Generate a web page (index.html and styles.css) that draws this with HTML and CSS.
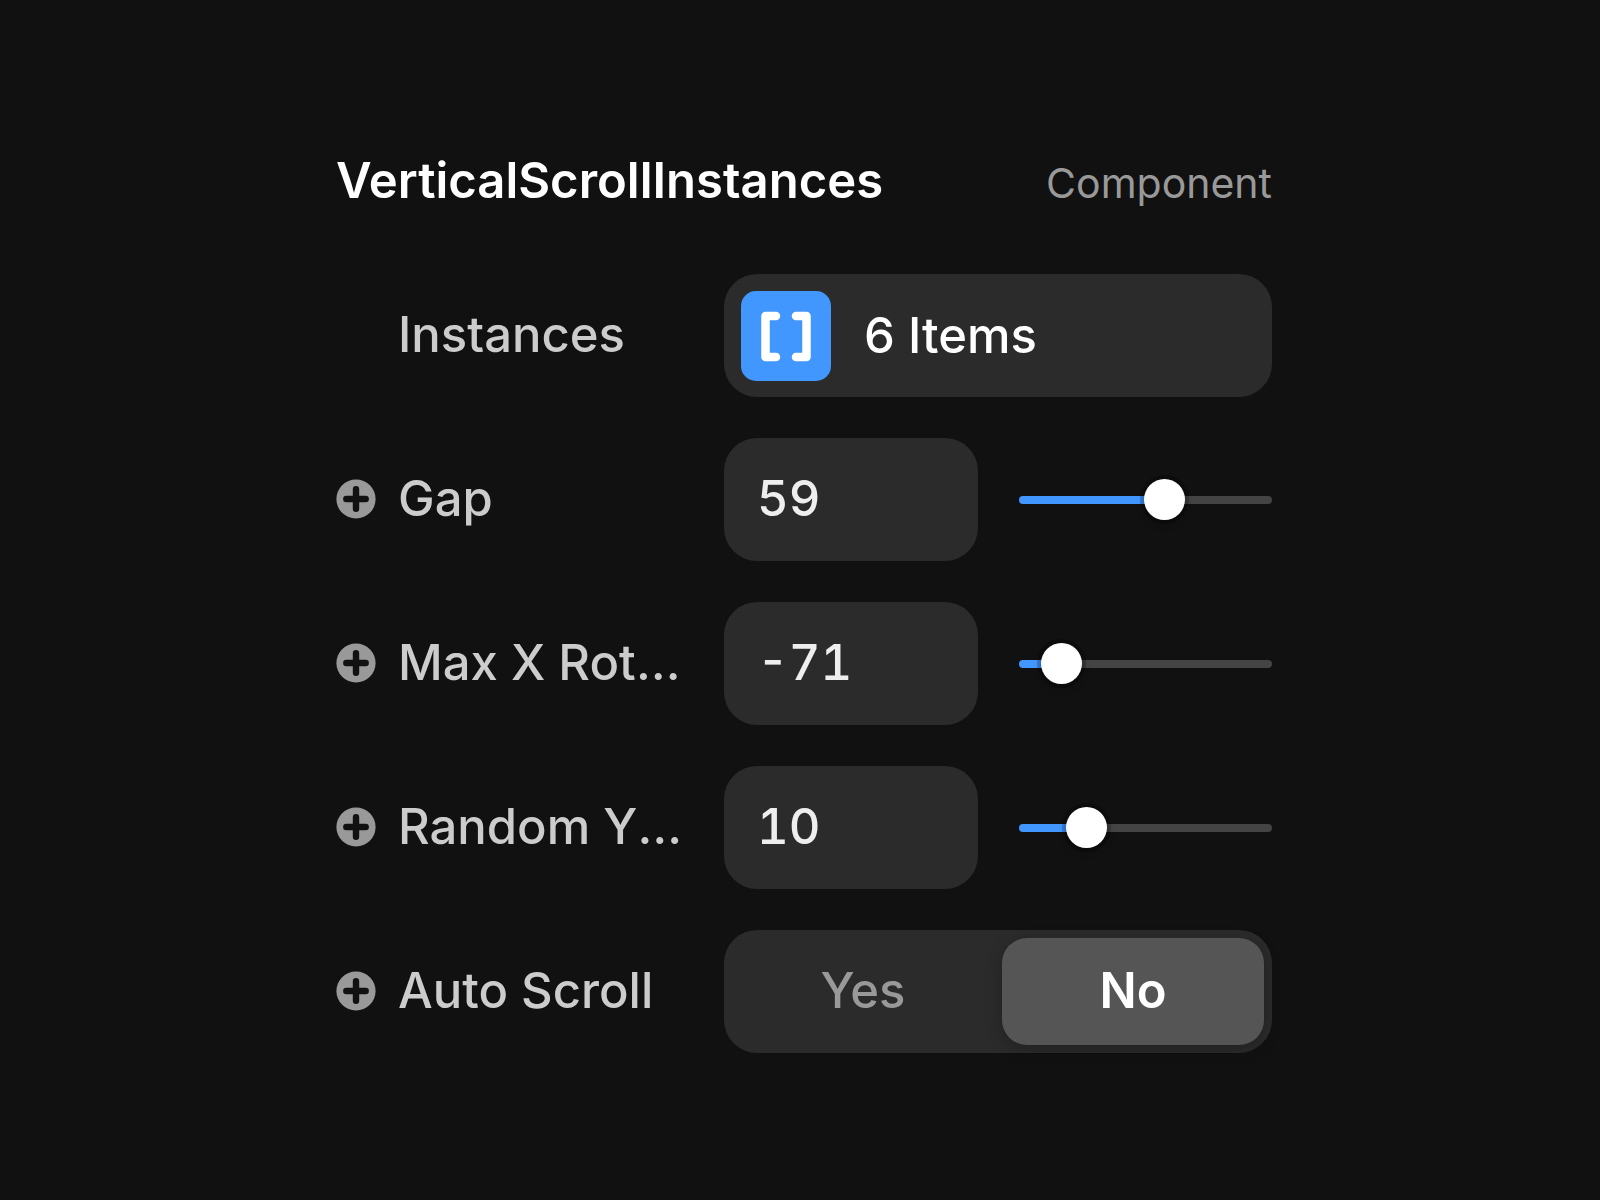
FILE: index.html
```html
<!DOCTYPE html>
<html lang="en">
<head>
    <meta charset="UTF-8">
    <meta name="viewport" content="width=device-width, initial-scale=1.0">
    <title>VerticalScrollInstances</title>
    <link rel="stylesheet" href="styles.css">
</head>
<body>
    <!-- Shared icon -->
    <svg class="sprite" aria-hidden="true">
        <symbol id="plus" viewBox="0 0 40 40">
            <circle cx="20" cy="20" r="19.6" fill="#999"/>
            <path d="M20 10.3v19.400M10.300 20h19.400" stroke="#111" stroke-width="6.400" stroke-linecap="round"/>
        </symbol>
    </svg>

    <main class="panel">
        <header class="panel-header">
            <h1 class="title">VerticalScrollInstances</h1>
            <span class="kind">Component</span>
        </header>

        <div class="rows">
            <div class="row">
                <span class="label label-plain" id="instances-label">Instances</span>
                <button class="field items" type="button" aria-describedby="instances-label">
                    <svg class="items-icon" viewBox="0 0 90 90" aria-hidden="true">
                        <rect width="90" height="90" rx="15" fill="#4297ff"/>
                        <path d="M35 25H24.500V66H35M55 25H65.500V66H55" fill="none" stroke="#fff" stroke-width="8.500" stroke-linecap="round" stroke-linejoin="round"/>
                    </svg>
                    <span>6 Items</span>
                </button>
            </div>

            <div class="row">
                <button class="add" type="button" aria-label="Add Gap variable"><svg><use href="#plus"/></svg></button>
                <label class="label" for="gap">Gap</label>
                <div class="number">
                    <input class="field value" id="gap" type="text" value="59">
                    <input class="slider" type="range" min="0" max="100" value="59" style="--fill: 59%" aria-label="Gap">
                </div>
            </div>

            <div class="row">
                <button class="add" type="button" aria-label="Add Max X Rotation variable"><svg><use href="#plus"/></svg></button>
                <label class="label" for="max-x">Max X Rotation</label>
                <div class="number">
                    <input class="field value" id="max-x" type="text" value="-71">
                    <input class="slider" type="range" min="-90" max="90" value="-71" style="--fill: 11%" aria-label="Max X Rotation">
                </div>
            </div>

            <div class="row">
                <button class="add" type="button" aria-label="Add Random Y Rotation variable"><svg><use href="#plus"/></svg></button>
                <label class="label" for="random-y">Random Y Rotation</label>
                <div class="number">
                    <input class="field value" id="random-y" type="text" value="10">
                    <input class="slider" type="range" min="0" max="45" value="10" style="--fill: 22%" aria-label="Random Y Rotation">
                </div>
            </div>

            <div class="row">
                <button class="add" type="button" aria-label="Add Auto Scroll variable"><svg><use href="#plus"/></svg></button>
                <span class="label" id="auto-label">Auto Scroll</span>
                <div class="field segments" role="group" aria-labelledby="auto-label">
                    <button class="segment" type="button" aria-pressed="false">Yes</button>
                    <button class="segment active" type="button" aria-pressed="true">No</button>
                </div>
            </div>
        </div>
    </main>
</body>
</html>
```

FILE: styles.css
```css
* {
    box-sizing: border-box;
}

body {
    margin: 0;
    min-height: 100vh;
    background-color: #111;
    color: #fff;
    font-family: Inter, sans-serif;
    font-size: 49px;
    font-weight: 500;
    line-height: 60px;
}

button,
input {
    margin: 0;
    padding: 0;
    border: 0;
    background: none;
    color: inherit;
    font: inherit;
}

button {
    cursor: pointer;
}

.sprite {
    display: none;
}

.panel {
    max-width: 944px;
    margin: 0 auto;
    padding: 151px 0 100px 8px;
}

.panel-header {
    display: flex;
    justify-content: space-between;
    align-items: baseline;
    margin-bottom: 61px;
}

.title {
    margin: 0;
    font-size: 49px;
    font-weight: 600;
}

.kind {
    color: #999;
    font-size: 41px;
    font-weight: 400;
}

.rows {
    display: grid;
    gap: 41px;
}

.row {
    display: grid;
    grid-template-columns: 40px 304px minmax(0, 1fr);
    column-gap: 22px;
    align-items: center;
}

.label {
    padding: 0 19px 2px 0;
    color: #ccc;
    white-space: nowrap;
    overflow: hidden;
    text-overflow: ellipsis;
}

.label-plain {
    grid-column: 2;
}

.add {
    padding-bottom: 2px;
}

.add svg {
    display: block;
    width: 40px;
    height: 40px;
}

.field {
    height: 123px;
    border-radius: 33px;
    background-color: #2b2b2b;
}

.items {
    display: flex;
    align-items: center;
    gap: 33px;
    padding: 17px;
}

.items-icon {
    width: 90px;
    height: 90px;
}

.number {
    display: grid;
    grid-template-columns: 1fr 1fr;
    gap: 41px;
    align-items: center;
}

.value {
    width: 100%;
    padding: 0 33px 2px;
    color: #eee;
    font-variant-numeric: tabular-nums;
}

/* Slider */
.slider {
    appearance: none;
    width: 100%;
    height: 41px;
}

.slider::-webkit-slider-runnable-track {
    height: 8px;
    border-radius: 4px;
    background: linear-gradient(to right, #4297ff var(--fill), #444 var(--fill));
}

.slider::-webkit-slider-thumb {
    appearance: none;
    width: 41px;
    height: 41px;
    margin-top: -17px;
    border-radius: 50%;
    background-color: #fff;
    box-shadow: 0 4px 8px rgba(0, 0, 0, 0.2), 0 0 0 4px rgba(0, 0, 0, 0.2);
}

/* Yes / No switch */
.segments {
    display: grid;
    grid-template-columns: 1fr 1fr;
    gap: 8px;
    padding: 8px;
}

.segment {
    padding-bottom: 2px;
    border-radius: 25px;
    color: #999;
}

.active {
    background-color: #555;
    color: #fff;
    font-weight: 600;
    box-shadow: 0 4px 16px rgba(0, 0, 0, 0.25);
}
```
